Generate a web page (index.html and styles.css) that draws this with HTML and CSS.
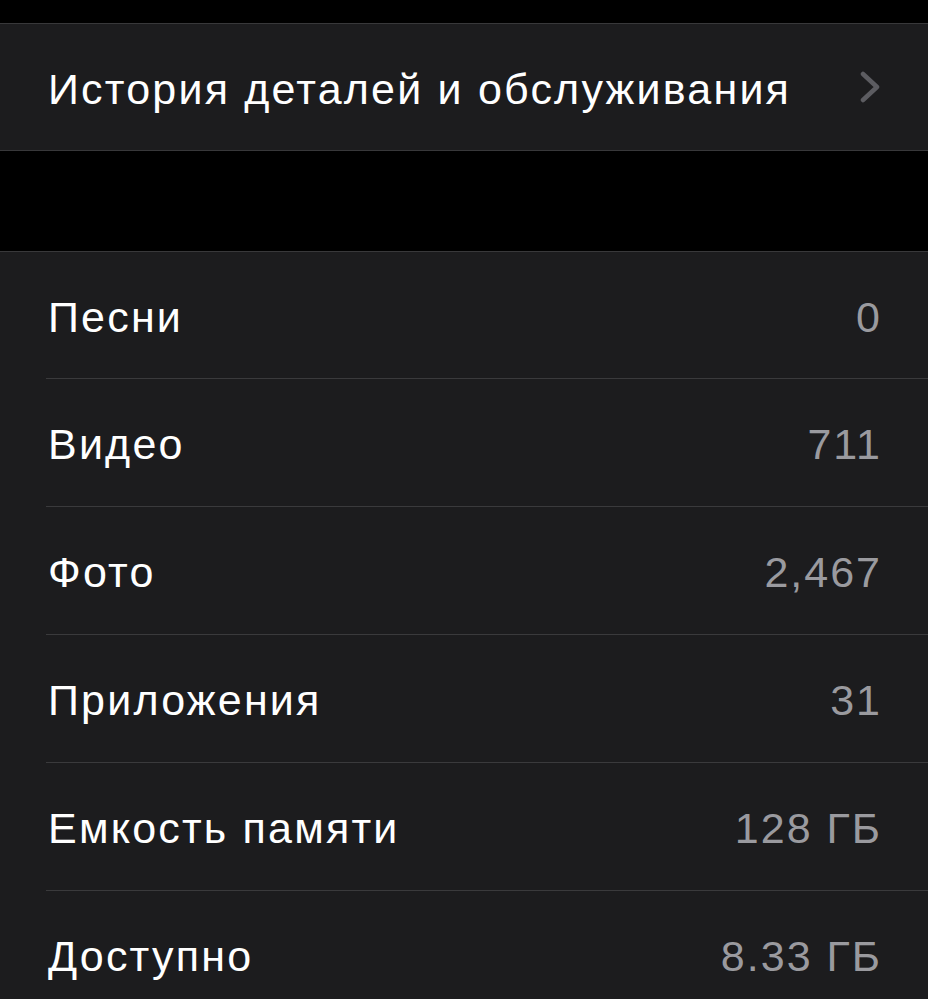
FILE: index.html
```
<!DOCTYPE html>
<html lang="ru">
<head>
    <meta charset="UTF-8">
    <meta name="viewport" content="width=device-width, initial-scale=1.0">
    <title>Об этом устройстве</title>
    <link rel="stylesheet" href="styles.css">
</head>
<body>
    <div class="top-gap"></div>

    <!-- Service history -->
    <div class="group">
        <div class="row">
            <span class="label">История деталей и обслуживания</span>
            <svg class="chevron" width="20" height="32" viewBox="0 0 20 32">
                <path d="M3 3 L17 16 L3 29" fill="none" stroke="#5c5c61" stroke-width="4.5" stroke-linecap="round" stroke-linejoin="round"/>
            </svg>
        </div>
    </div>

    <div class="section-gap"></div>

    <!-- Device stats -->
    <div class="group">
        <div class="row"><span class="label">Песни</span><span class="value">0</span></div>
        <div class="row"><span class="label">Видео</span><span class="value">711</span></div>
        <div class="row"><span class="label">Фото</span><span class="value">2,467</span></div>
        <div class="row"><span class="label">Приложения</span><span class="value">31</span></div>
        <div class="row"><span class="label">Емкость памяти</span><span class="value">128 ГБ</span></div>
        <div class="row"><span class="label">Доступно</span><span class="value">8.33 ГБ</span></div>
    </div>
</body>
</html>
```

FILE: styles.css
```
body {
    font-family: 'Liberation Sans', Arial, sans-serif;
    background-color: #000;
    margin: 0;
    padding: 0;
    color: #fff;
}

.top-gap {
    height: 23px;
}

.section-gap {
    height: 100px;
}

.group {
    background-color: #1c1c1e;
    border-top: 1px solid #38383a;
    border-bottom: 1px solid #38383a;
}

.row {
    height: 127px;
    display: flex;
    align-items: center;
    justify-content: space-between;
    padding: 4px 48px 0 48px;
    position: relative;
    box-sizing: border-box;
}

.group .row:first-child {
    height: 126px;
}

.row + .row::before {
    content: "";
    position: absolute;
    top: -1px;
    left: 46px;
    right: 0;
    height: 1px;
    background-color: #3a3a3c;
}

.row + .row {
    margin-top: 1px;
}

.label {
    font-size: 43px;
    letter-spacing: 2.2px;
}

.value {
    font-size: 43px;
    color: #9a9a9f;
    letter-spacing: 2px;
    margin-right: -2px;
}

.chevron {
    display: block;
    margin-top: -4px;
}
```
